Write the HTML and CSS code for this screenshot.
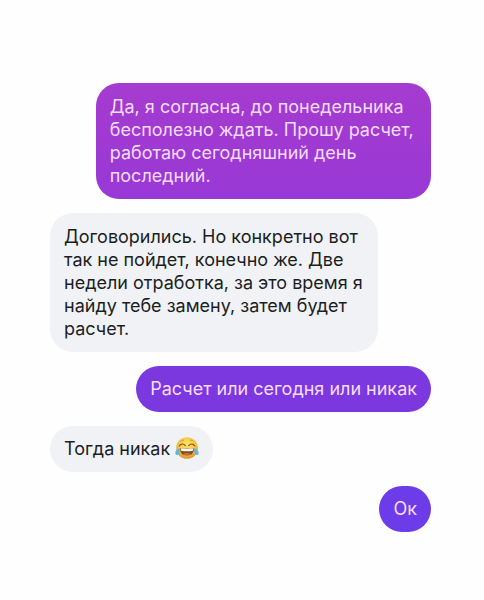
FILE: index.html
```html
<!DOCTYPE html>
<html lang="ru">
<head>
    <meta charset="UTF-8">
    <meta name="viewport" content="width=device-width, initial-scale=1.0">
    <title>Чат</title>
    <link rel="stylesheet" href="styles.css">
</head>
<body>
    <main class="chat">
        <p class="message sent first">Да, я согласна, до понедельника бесполезно ждать. Прошу расчет, работаю сегодняшний день последний.</p>

        <p class="message received">Договорились. Но конкретно вот так не пойдет, конечно же. Две недели отработка, за это время я найду тебе замену, затем будет расчет.</p>

        <p class="message sent short second">Расчет или сегодня или никак</p>

        <p class="message received short">Тогда никак
            <svg class="emoji" viewBox="0 0 24 24" role="img" aria-label="Смех до слез">
                <defs>
                    <radialGradient id="face" cx="50%" cy="35%" r="65%">
                        <stop offset="0" stop-color="#ffe36a"/>
                        <stop offset="0.6" stop-color="#f6c545"/>
                        <stop offset="1" stop-color="#d7952f"/>
                    </radialGradient>
                </defs>
                <circle cx="12" cy="12" r="10.8" fill="url(#face)"/>
                <path d="M5.6 5.2Q6.8 3.8 8.6 4.1M15.4 4.1Q17.2 3.8 18.4 5.2" fill="none" stroke="#c18a32" stroke-width="0.7" stroke-linecap="round"/>
                <path d="M4.2 10Q7.1 6.2 10.4 9.6M13.6 9.6Q16.9 6.2 19.8 10" fill="none" stroke="#7a4d1f" stroke-width="1.1" stroke-linecap="round"/>
                <path d="M4.8 12Q12 13 19.2 12Q19 19.4 12 19.4Q5 19.4 4.8 12Z" fill="#80491f"/>
                <path d="M5.5 12.3Q12 13.2 18.5 12.3L18 14.8Q12 15.8 6 14.8Z" fill="#fff8ea"/>
                <path d="M7.8 18Q12 15.8 16.2 18Q12 20.4 7.8 18Z" fill="#d9633c"/>
                <path d="M5 12.4C2.2 12.6 0.1 15 0.3 17.2C0.5 19.5 3.4 19.6 4.2 17.4C4.8 15.8 4.6 14.2 5 12.4Z" fill="#63b6df"/>
                <path d="M19 12.4C21.8 12.6 23.9 15 23.7 17.2C23.5 19.5 20.6 19.6 19.8 17.4C19.2 15.8 19.4 14.2 19 12.4Z" fill="#63b6df"/>
            </svg>
        </p>

        <p class="message sent short third">Ок</p>
    </main>
</body>
</html>
```
FILE: styles.css
```css
:root {
    --text-dark: #1d1e23;
    --text-light: #f5dcfa;
    --received: #f0f2f6;
}

* {
    box-sizing: border-box;
}

body {
    margin: 0;
    background: #fefefe;
    font-family: Inter, "Noto Sans", sans-serif;
    font-size: 18px;
    line-height: 23px;
}

.chat {
    display: flex;
    flex-direction: column;
    gap: 14px;
    padding: 83px 53px 68px 50px;
}

.message {
    margin: 0;
    padding: 12px 14px;
    border-radius: 23px;
    max-width: 88%;
}

.short {
    padding-top: 11px;
}

.received {
    align-self: flex-start;
    max-width: 86%;
    background: var(--received);
    color: var(--text-dark);
}

.sent {
    align-self: flex-end;
    color: var(--text-light);
}

.first {
    background: linear-gradient(#a63bcf, #9838d6);
}

.second {
    background: #7b38df;
}

.third {
    background: #6c3ce8;
}

.emoji {
    width: 24px;
    height: 24px;
    margin-top: -4px;
    vertical-align: -5px;
}
```
